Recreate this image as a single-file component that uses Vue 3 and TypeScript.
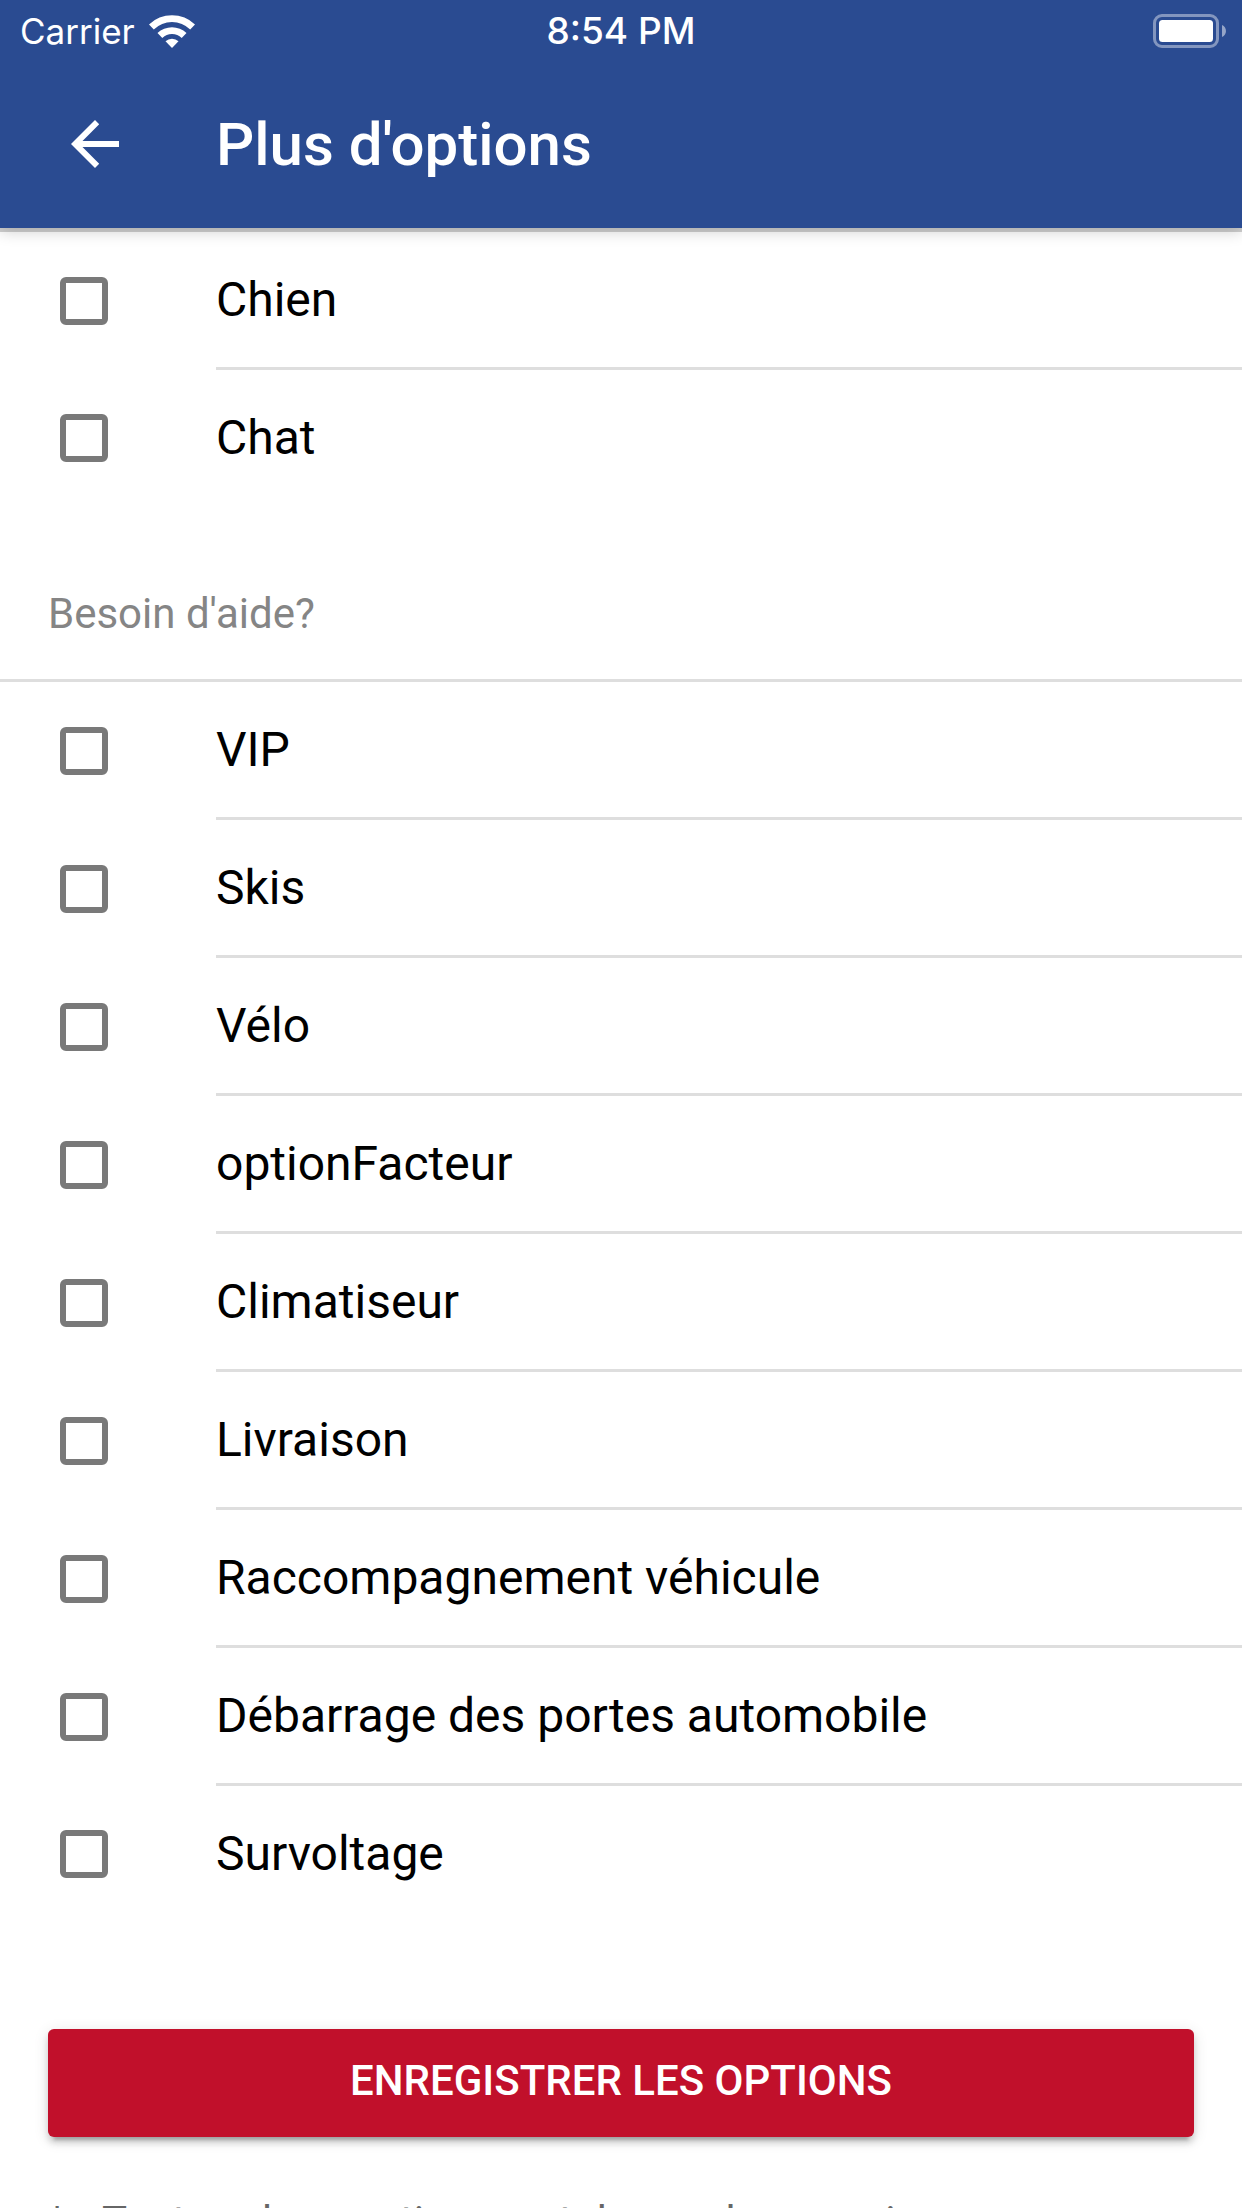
<script setup lang="ts">
import { reactive } from 'vue'

interface Option {
  id: string
  label: string
  checked: boolean
}

const option = (id: string, label: string): Option => ({ id, label, checked: false })

const animals = reactive<Option[]>([option('chien', 'Chien'), option('chat', 'Chat')])

const services = reactive<Option[]>([
  option('vip', 'VIP'),
  option('skis', 'Skis'),
  option('velo', 'Vélo'),
  option('facteur', 'optionFacteur'),
  option('climatiseur', 'Climatiseur'),
  option('livraison', 'Livraison'),
  option('raccompagnement', 'Raccompagnement véhicule'),
  option('debarrage', 'Débarrage des portes automobile'),
  option('survoltage', 'Survoltage'),
])
</script>

<template>
  <div class="screen">
    <header class="header">
      <div class="status">
        <div class="network">
          <span>Carrier</span>
          <svg class="wifi" viewBox="0 0 46 34" aria-hidden="true">
            <path d="M0 10.500a33 33 0 0 1 46 0l-4.800 5a26 26 0 0 0-36.400 0z" />
            <path d="M8.500 19a21 21 0 0 1 29 0l-4.800 5a14 14 0 0 0-19.400 0z" />
            <path d="M16.500 27.300a9.500 9.500 0 0 1 13 0L23 34z" />
          </svg>
        </div>
        <time class="clock">8:54 PM</time>
        <div class="power">
          <svg class="battery" viewBox="0 0 74 34" aria-label="Batterie pleine">
            <rect x="1.500" y="1.500" width="63" height="31" rx="7.500" fill="none" stroke="#fff" stroke-opacity=".42" stroke-width="3" />
            <rect x="6" y="6" width="54" height="22" rx="3.500" fill="#fff" />
            <path d="M69 11v12c5.300-2 5.300-10 0-12z" fill="#fff" fill-opacity=".5" />
          </svg>
        </div>
      </div>
      <div class="toolbar">
        <button class="back" type="button" aria-label="Retour">
          <svg viewBox="0 0 48 48" aria-hidden="true">
            <path d="M48 21H11.500L28.200 4.200 24 0 0 24l24 24 4.200-4.200L11.500 27H48z" />
          </svg>
        </button>
        <h1>Plus d'options</h1>
      </div>
    </header>

    <main>
      <ul class="list">
        <li v-for="item in animals" :key="item.id">
          <label class="row">
            <input v-model="item.checked" type="checkbox" />
            <span class="label">{{ item.label }}</span>
          </label>
        </li>
      </ul>

      <h2>Besoin d'aide?</h2>
      <ul class="list">
        <li v-for="item in services" :key="item.id">
          <label class="row">
            <input v-model="item.checked" type="checkbox" />
            <span class="label">{{ item.label }}</span>
          </label>
        </li>
      </ul>

      <button class="save" type="button">ENREGISTRER LES OPTIONS</button>
      <div class="note">
        <span>*</span>
        <p>Toutes charges tierces et demandes pour inconnus</p>
      </div>
    </main>
  </div>
</template>

<style>
html,
body {
  background: #fff;
}

body {
  margin: 0;
}
</style>

<style scoped>
.screen {
  height: 100vh;
  overflow: hidden;
  display: flex;
  flex-direction: column;
  font-family: Roboto, sans-serif;
  color: #000;
}

.header {
  position: relative;
  flex: none;
  background: #2a4b91;
  color: #fff;
  box-shadow: 0 4px 0 rgba(0, 0, 0, 0.18), 0 3px 15px rgba(0, 0, 0, 0.2);
}

.status {
  display: grid;
  grid-template-columns: 1fr auto 1fr;
  align-items: center;
  height: 60px;
  font-family: Inter, sans-serif;
  font-size: 35px;
  line-height: 62px;
}

.network {
  display: flex;
  align-items: center;
  gap: 14px;
  padding-left: 20px;
}

.wifi {
  width: 46px;
  height: 34px;
  fill: #fff;
}

.clock {
  font-size: 37px;
  font-weight: 500;
}

.power {
  display: flex;
  justify-content: flex-end;
  padding-right: 15px;
}

.battery {
  width: 74px;
  height: 34px;
}

.toolbar {
  display: flex;
  align-items: center;
  height: 168px;
}

.back {
  display: flex;
  align-items: center;
  width: 216px;
  height: 144px;
  padding: 0 0 0 71px;
  border: 0;
  background: none;
}

.back svg {
  width: 48px;
  height: 48px;
  fill: #fff;
}

h1 {
  margin: 0;
  padding-top: 2px;
  font-size: 60px;
  font-weight: 500;
  line-height: 72px;
}

main {
  flex: 1;
  min-height: 0;
  padding-top: 4px;
  overflow: hidden;
}

.list {
  margin: 0;
  padding: 0;
  list-style: none;
}

.row {
  display: flex;
  align-items: center;
}

.row input {
  appearance: none;
  flex: none;
  box-sizing: border-box;
  width: 48px;
  height: 48px;
  margin: 0 108px 0 60px;
  border: 6px solid #797979;
  border-radius: 6px;
}

.row input:checked {
  background: #2a4b91;
  border-color: #2a4b91;
}

.label {
  flex: 1;
  font-size: 48px;
  line-height: 135px;
  border-bottom: 3px solid #dedede;
}

li:last-child .label {
  border-bottom: 0;
}

h2 {
  margin: 44px 0 0;
  padding: 0 48px;
  border-bottom: 3px solid #dedede;
  color: #858585;
  font-size: 42px;
  font-weight: 400;
  line-height: 130px;
}

.save {
  display: block;
  width: calc(100% - 96px);
  height: 108px;
  margin: 108px 48px 0;
  padding: 0 0 6px;
  border: 0;
  border-radius: 6px;
  background: #c1102b;
  color: #fff;
  font-family: inherit;
  font-size: 42px;
  font-weight: 500;
  box-shadow: 0 9px 3px -6px rgba(0, 0, 0, 0.2), 0 6px 6px rgba(0, 0, 0, 0.14), 0 3px 15px rgba(0, 0, 0, 0.12);
}

.note {
  display: flex;
  gap: 36px;
  padding: 61px 48px 0;
  color: #666;
  font-size: 42px;
  line-height: 48px;
}

.note p {
  margin: 0;
}
</style>
